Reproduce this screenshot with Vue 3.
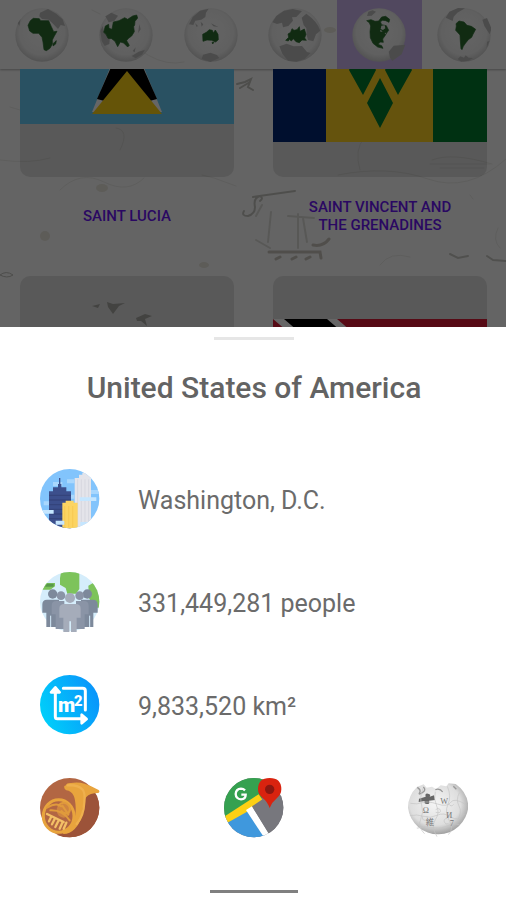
<template>
  <div class="screen">
    <div class="browse">
      <svg class="map-art" viewBox="0 0 506 327" preserveAspectRatio="xMidYMin slice" aria-hidden="true">
        <g fill="none" stroke="#ebebe8" stroke-width="1" stroke-linecap="round">
          <path d="M0 275q6-5 13 0q-6 4-13 0" stroke="#c0c0bb" />
          <path d="M92 10l8 4M202 175l12 3 22 8M10 107l10 3M60 190q20-20 44-8t40-4M120 150q10-20-4-22M110 20q40 50 74 42" />
          <path d="M237 84l8-2 6-3-3 8 5 3M240 88l10-6" stroke="#c0c0bb" stroke-width="2" />
          <path d="M244 211q-3 5 4 5q7-2 7-9q-2-9 5-11q4 2 0 5M253 197l42-6" stroke="#c4c4be" stroke-width="2" />
          <path d="M262 205l-6 11M271 212l-3 30M298 214v34M303 218l4 24M256 240l14 8M288 216l26 2" stroke="#dcdcd8" stroke-width="2" />
          <path d="M269 252h51l1 6M280 257l-4 2M296 257l-4 2M310 257l-4 2M313 245q10 2 16-6" stroke="#c8c4bb" stroke-width="3" />
          <path d="M450 254l8 4 10-2M487 256l6 4 13 1" stroke="#c8c8c3" stroke-width="2" />
          <path d="M470 195l3 4M498 228q-6 12 2 20M380 265q10-14 30-8M0 160q30 4 50-2M338 175q50-10 90 4t78-20" />
          <path d="M360 170q-6-20 4-32M430 164h60M440 168h44M432 160q20-8 60 4" />
        </g>
        <g fill="#bcbcb7">
          <path d="M107 302l6 2 12-1-6 3-6 8-5-7zM136 318l9-4 7 2-7 3 2 7-6-5-4 0zM92 306l8-2-2 4z" />
        </g>
        <g fill="#e8e5dc">
          <ellipse cx="45" cy="236" rx="5" ry="5" />
          <ellipse cx="204" cy="265" rx="5" ry="3" />
          <ellipse cx="102" cy="188" rx="6" ry="4" />
          <ellipse cx="330" cy="30" rx="6" ry="3" />
        </g>
      </svg>

      <nav class="regions">
        <button
          v-for="(region, index) in regions"
          :key="region.name"
          type="button"
          class="region"
          :class="{ active: region.name === activeRegion }"
          :aria-label="region.name"
          @click="activeRegion = region.name"
        >
          <svg class="globe" :viewBox="`${region.x} 24 162 162`" aria-hidden="true">
            <defs>
              <radialGradient :id="'shade-' + index" cx="50%" cy="45%" r="56%">
                <stop offset="0" stop-color="#fafafa" />
                <stop offset="0.75" stop-color="#f0f0f0" />
                <stop offset="1" stop-color="#cccccc" />
              </radialGradient>
            </defs>
            <circle :cx="region.x + 81" cy="105" r="80" :fill="`url(#shade-${index})`" />
            <path :d="region.other" fill="#bcbcbc" />
            <path :d="region.land" fill="#2b6b2f" stroke="#2b6b2f" stroke-width="2" stroke-linejoin="round" />
            <path v-if="region.lakes" :d="region.lakes" fill="#dfe5df" />
          </svg>
        </button>
      </nav>

      <main class="countries">
        <div class="grid">
          <article v-for="country in countries" :key="country.flag" class="country">
            <div class="flag-box">
              <svg v-if="country.flag === 'lc'" class="flag" viewBox="0 0 214 107" aria-hidden="true">
                <path d="M0 0h214v107H0z" fill="#66cbf5" />
                <path d="M107 9l35 86H72z" fill="#fff" />
                <path d="M107 14l30 68-30 8-30-8z" fill="#000" />
                <path d="M107 54l35 43H72z" fill="#fcd116" />
              </svg>
              <svg v-else-if="country.flag === 'vc'" class="flag" viewBox="0 0 214 143" aria-hidden="true">
                <path d="M0 0h54v143H0z" fill="#002674" />
                <path d="M53 0h108v143H53z" fill="#fcd022" />
                <path d="M160 0h54v143h-54z" fill="#007c2e" />
                <path d="M89 46l14 25-13 25-14-25zM125 46l14 25-14 25-13-25zM107 79l13 25-13 25-13-25z" fill="#007c2e" />
              </svg>
              <svg v-else-if="country.flag === 'bs'" class="flag" viewBox="0 0 214 107" aria-hidden="true">
                <path d="M0 0h214v107H0z" fill="#00778b" />
                <path d="M0 36h214v35H0z" fill="#ffc72c" />
                <path d="M0 0l93 53L0 107z" fill="#000" />
              </svg>
              <svg v-else class="flag" viewBox="0 0 214 128" aria-hidden="true">
                <path d="M0 0h214v128H0z" fill="#da1a35" />
                <path d="M0 0h64l150 128h-64z" fill="#fff" />
                <path d="M11 0h43l149 128h-43z" fill="#000" />
              </svg>
            </div>
            <h2 v-if="country.name" class="country-name">{{ country.name }}</h2>
          </article>
        </div>
      </main>
      <div class="scrim"></div>
    </div>

    <section class="sheet" aria-labelledby="sheet-title">
      <div class="handle"></div>
      <h1 id="sheet-title" class="title">United States of America</h1>

      <ul class="facts">
        <li class="fact">
          <svg class="icon" viewBox="29 29 180 180" aria-hidden="true">
            <defs><clipPath id="clip-city"><circle cx="118" cy="118" r="89" /></clipPath></defs>
            <g clip-path="url(#clip-city)">
              <path d="M28 28h182v182H28z" fill="#82c4fc" />
              <path d="M68 68h28v12H68zM40 126h20v12H40zM110 60h22v12h-22zM180 92h30v12h-30zM100 106h32v12h-32z" fill="#a9d7fd" />
              <path d="M133 56h13V46h10v-6h14v-8h6v8h4v16h2v154h-49z" fill="#e4e4ea" />
              <path d="M142 60v150M153 60v150M164 60v150M175 60v150" stroke="#d6d7df" stroke-width="3" />
              <path d="M56 96h12V84h15V74h3V56h4v18h3v10h15v12h14v114H56z" fill="#3c4f8c" />
              <path d="M56 108h66M56 122h66M56 136h66M56 150h66M56 164h66M56 178h66" stroke="#34447c" stroke-width="4" />
              <path d="M96 130h10v-6h24v6h12v80H96z" fill="#fcd462" />
              <path d="M103 140v64M115 140v64M127 140v64" stroke="#f8cb55" stroke-width="4" />
              <path d="M148 114h50v11h-50zM28 152h42v11H28zM76 184h26v12H76zM150 188h36v12h-36z" fill="#c5e6ff" />
            </g>
          </svg>
          <span>Washington, D.C.</span>
        </li>
        <li class="fact">
          <svg class="icon" viewBox="29 29 180 180" aria-hidden="true">
            <defs><clipPath id="clip-people"><circle cx="118" cy="118" r="89" /></clipPath></defs>
            <g clip-path="url(#clip-people)">
              <path d="M28 28h182v182H28z" fill="#d5edfb" />
              <path d="M92 28h55v52l-10 14h-26l-5-17-17-10V48z" fill="#7dc35b" />
              <path d="M46 62h28v10l-14 10H36zM174 70l14-8 24 20v54h-18l-18-28z" fill="#7dc35b" />
              <path d="M50 64h20v9H44z" fill="#58984b" />
            </g>
            <g fill="#7d899b">
              <circle cx="67" cy="95" r="14" />
              <circle cx="171" cy="95" r="14" />
              <path d="M36 151v-25q0-14 14-14h36v82H48v-43z" />
              <path d="M202 151v-25q0-14-14-14h-36v82h37v-43z" />
            </g>
            <g fill="#8a94a6">
              <circle cx="92" cy="100" r="13" />
              <circle cx="148" cy="100" r="13" />
              <path d="M64 156v-26q0-14 14-14h24v84H76v-44zM175 156v-26q0-14-14-14h-24v84h26v-44z" />
            </g>
            <path d="M61 160v34M178 160v34" stroke="#d5edfb" stroke-width="3" />
            <g fill="#a5acba">
              <circle cx="119" cy="107" r="15" />
              <path d="M87 166v-27q0-14 15-14h34q15 0 15 14v27h-12v43h-17v-32h-5v32H99v-43z" />
            </g>
          </svg>
          <span>331,449,281 people</span>
        </li>
        <li class="fact">
          <svg class="icon" viewBox="29 29 180 180" aria-hidden="true">
            <defs>
              <linearGradient id="area-fill" x1="0" y1="0.7" x2="1" y2="0.3">
                <stop offset="0" stop-color="#00d0fa" />
                <stop offset="1" stop-color="#0a93fb" />
              </linearGradient>
            </defs>
            <circle cx="118" cy="118" r="89" fill="url(#area-fill)" />
            <path d="M75 80v74q0 6 6 6h76M99 69h58q8 0 8 8v57" fill="none" stroke="#fff" stroke-width="9" stroke-linecap="round" />
            <path d="M75 66l13 15H62zM169 161l-15-13v26z" fill="#fff" stroke="#fff" stroke-width="8" stroke-linejoin="round" />
            <text x="83" y="139" class="area-m">m</text>
            <text x="131" y="121" class="area-two">2</text>
          </svg>
          <span>9,833,520 km²</span>
        </li>
      </ul>

      <div class="links">
        <a href="#anthem" aria-label="Anthem">
          <svg class="icon" viewBox="29 29 180 180" aria-hidden="true">
            <circle cx="118" cy="118" r="89" fill="#b26643" />
            <path d="M171 49q36 28 36 69a89 89 0 0 1-89 89q-22 0-40-8 65-5 78-62z" fill="#9c5339" />
            <path d="M107 51q2-8 15-7 20-4 41 2 20 6 42 19 5 5-1 9-26 0-36 12-8 10-10 30-2 43-25 66-14 15-34 15l-4-12q16-4 27-15 16-19 14-53-1-25-6-35-7-14-22-16-8-4-6-13z" fill="#e8a43d" />
            <path d="M112 51q32-2 45 13 8 11 5 37-2 43-23 66" fill="none" stroke="#efb04e" stroke-width="7" stroke-linecap="round" />
            <ellipse cx="85" cy="143" rx="46" ry="49" fill="none" stroke="#e8a43d" stroke-width="9" />
            <ellipse cx="100" cy="126" rx="21" ry="22" fill="#cf8440" />
            <path d="M50 118q28-16 42-4M84 112q12-13 25-6 15 11 7 25-13 9-23-3M96 112l18 26M60 126q36-2 58 30" fill="none" stroke="#e09a3c" stroke-width="6" stroke-linecap="round" />
            <path d="M50 137l50 24M62 147l-6 12M73 152l-8 16M84 158l-9 18M96 163l-8 18M108 163l-8 18" stroke="#f3c066" stroke-width="7" stroke-linecap="round" />
          </svg>
        </a>
        <a href="#map" aria-label="Map">
          <svg class="icon" viewBox="29 29 180 180" aria-hidden="true">
            <defs><clipPath id="clip-map"><circle cx="118" cy="118" r="89" /></clipPath></defs>
            <g clip-path="url(#clip-map)">
              <path d="M28 28h182v182H28z" fill="#77777d" />
              <path d="M28 28h140v46L28 152z" fill="#35a150" />
              <path d="M34 162l69-38 56 86H28z" fill="#3f98dd" />
              <path d="M28 146l105-68 16 24L34 166z" fill="#fdd014" />
              <path d="M95 125l18-11 55 88-17 8z" fill="#fff" />
              <path d="M113 114l36-24 62-10v94l-43 30z" fill="#77777d" />
            </g>
            <path d="M166 119q-7-20-22-31-13-10-13-25 0-34 35-34t35 34q0 15-13 26-15 12-22 30z" fill="#d9230f" />
            <circle cx="166" cy="63" r="14" fill="#8c1710" />
            <path d="M92 66q-5-5-12-5-15 1-16 16 1 15 16 16 14-1 14-14H81" fill="none" stroke="#fff" stroke-width="7" />
          </svg>
        </a>
        <a href="#wiki" aria-label="Wikipedia">
          <svg class="icon" viewBox="29 29 180 180" aria-hidden="true">
            <defs>
              <radialGradient id="wiki-fill" cx="45%" cy="40%" r="60%">
                <stop offset="0" stop-color="#f5f5f5" />
                <stop offset="0.7" stop-color="#dedede" />
                <stop offset="1" stop-color="#a2a2a2" />
              </radialGradient>
              <clipPath id="clip-wiki"><circle cx="119" cy="118" r="89" /></clipPath>
            </defs>
            <path d="M56 56l20-8 9 10 16-3 12 7 14-11 17 3 7-9 21 2q36 25 38 68a91 91 0 0 1-181 3q0-36 27-62z" fill="url(#wiki-fill)" />
            <path d="M62 91l20-6q-3-11 7-9t5 9l13-4 3 14-18 2q4 10-6 10t-7-9l-18 3z" fill="#666" />
            <path d="M57 57q12 8 7 16t8 0 3-17M111 64q14-5 22 7M165 54l9 9" fill="none" stroke="#999" stroke-width="4" />
            <g fill="none" stroke="#c4c4c4" stroke-width="2" clip-path="url(#clip-wiki)">
              <path d="M36 105q21 4 36-2t45 4 40-5 45 6M34 142q22-5 42 2t40-3 42 5 40-9M54 180q24-8 48-2t45-5 37-3" />
              <path d="M74 60q-11 28-4 50t-3 43 12 44M111 70q-6 22 4 43t-4 41 5 51M147 54q13 30 2 54t4 49-3 42M183 73q-11 22-1 40t-4 42" />
              <path d="M112 124q11-8 14 2t-14 6M74 143q-5 12 6 13t6-12M150 106q9 12 16 2M146 150q-11 2-8 11t12 5" />
            </g>
            <g class="wiki-glyphs">
              <text x="73" y="134">Ω</text>
              <text x="126" y="108">W</text>
              <text x="144" y="148">И</text>
              <text x="82" y="171">維</text>
              <text x="154" y="174">7</text>
            </g>
          </svg>
        </a>
      </div>
      <div class="home-bar"></div>
    </section>
  </div>
</template>

<script setup>
import { ref } from 'vue'

const activeRegion = ref('North America')

const regions = [
  {
    name: 'Africa',
    x: 46,
    land: 'M85 76l7-14 9-7 18 1 4 6 24 0 8 18 7 15 10-1-9 16-5 10 0 12-7 13-11 7-7-3-3-23-3-14-10-12-17 0-10-7zM166 125l4-3-2 10-8 6 0-7z',
    other: 'M121 38l24-11 25 14 19 17 7 20-13-3-8 12-15-16-13-12-20-2-8-8zM54 70l9-13-4 21z'
  },
  {
    name: 'Asia',
    x: 300,
    land: 'M319 78l10-5 1 12 9 3 4-22 17-4 17-9 9 5 15-10 12-3 3 9-8 10-1 11-3 5 2 15-8 13-11 8-4 6 8 14-5 5-12-12-10-3-8 14-8-16-10-8-11-1-6-12-7-6z',
    other: 'M319 49l18-11 20 9-11 16-17 4zM304 93l7-15 5 20 17 12-2 22-14 6-9-15zM398 168l21-13 19-6-9 15-19 11zM380 144l10 11M410 142l-9 11 6 4zM421 72l4 16-8 12z'
  },
  {
    name: 'Oceania',
    x: 553,
    land: 'M609 103l11-6 9-8 9 2 3 8 6-9 8 13 1 16-8 7-12-5-14-1-12 4zM637 127l6 0-4 5z',
    other: 'M568 73l11-22 22-19 26-6-8 12-2 13-12 8-18 3-6 13zM586 69l9 9-4 3zM603 65l8 8-5 7zM634 70l22 11-15-2zM606 177l4-13 22-6 20 7 7 9-27 12z'
  },
  {
    name: 'Europe',
    x: 46,
    land: 'M99 121l9-9-2-10 8-5 4-11 6 5 9-2 7-9 2 14 13-7 5 16-4 11 5 7-13-1-8 8-10-3-8-9-6 7-6-5-3 5z',
    other: 'M59 67l12-19 23-16 26-5 28 6-17 18-13 1 3 10-14 16-16 4-3-14-15 4zM147 53l14-12q33 23 42 51l-13 11-8 21-16-4-4-14-1-21-8-10zM80 139l22-8 21 8 25-1 15 18 11 3-18 18-24 8-26-3-17-21z'
  },
  {
    name: 'North America',
    x: 300,
    land: 'M344 62l13-3 12 5 11-1 9-12 12-2 12 9-2 9-10-5-9-1-7 4 4 9 14 3 7 14-6 8-6 10-6 8 2 10-9-1-7 7 11 4 4 8-16-4-14-11-8-17-1-18 2-17-4-10z',
    other: 'M345 48l4-13 13-4 10 4-13 12zM410 155l15-18 35-3-11 29-28 20-7-10z',
    lakes: 'M388 77l10-1 2 9-7 5-7-3zM384 89l8 5-6 2zM398 99l5-1-3 5z'
  },
  {
    name: 'South America',
    x: 554,
    land: 'M611 71l9-8 15 3 9 10 13 3 13 9-8 15-4 9-10 7-8 10-7 10-4 10-3-3-2-23-1-18-13-14 2-13z',
    other: 'M580 53l11-18 26-11 21 1-23 13-11 12-3 13zM690 59l14-5 14 32-6 17-16-25zM704 125l8-3-9 22zM616 177l8-8 11 4 5-7 9 7 13 1-13 8-23 3z'
  }
]

const countries = [
  { name: 'Saint Lucia', flag: 'lc' },
  { name: 'Saint Vincent and the Grenadines', flag: 'vc' },
  { flag: 'bs' },
  { flag: 'tt' }
]
</script>

<style>
body {
  margin: 0;
  background: #fff;
}
</style>

<style scoped>
.screen {
  height: 100vh;
  display: flex;
  flex-direction: column;
  overflow: hidden;
  font-family: Roboto, sans-serif;
}

.browse {
  position: relative;
  flex: 1;
  min-height: 0;
  display: flex;
  flex-direction: column;
  overflow: hidden;
  background: #fafafa;
}

.map-art {
  position: absolute;
  inset: 0;
  width: 100%;
  height: 100%;
}

.scrim {
  position: absolute;
  inset: 0;
  background: rgba(0, 0, 0, 0.6);
}

.regions {
  position: relative;
  display: flex;
  flex: none;
  height: 69px;
  box-shadow: 0 1px 2px rgba(0, 0, 0, 0.3);
}

.region {
  flex: 1;
  display: flex;
  align-items: center;
  justify-content: center;
  padding: 0;
  border: none;
  background: transparent;
}

.region.active {
  background: #cbb4ee;
}

.globe {
  width: 54px;
  height: 54px;
}

.countries {
  position: relative;
  flex: 1;
  min-height: 0;
  overflow: hidden;
}

/* list is scrolled part of the way down */
.grid {
  display: grid;
  grid-template-columns: 1fr 1fr;
  gap: 21px 39px;
  padding: 0 19px 0 20px;
  margin-top: -106px;
}

.flag-box {
  display: flex;
  align-items: center;
  aspect-ratio: 1;
  border-radius: 10px;
  background: rgba(0, 0, 0, 0.11);
}

.flag {
  display: block;
  width: 100%;
}

.country-name {
  display: flex;
  align-items: center;
  justify-content: center;
  height: 78px;
  margin: 0;
  padding: 0 28px;
  font-size: 15px;
  font-weight: 500;
  line-height: 18px;
  text-align: center;
  text-transform: uppercase;
  color: #6a14f5;
}

.sheet {
  flex: none;
  padding: 10px 38px 7px 40px;
  background: #fff;
  color: #6b6b6b;
}

.handle {
  width: 80px;
  height: 3px;
  margin: 0 auto;
  background: #e6e6e6;
}

.title {
  margin: 30px 0 63px;
  font-size: 30px;
  font-weight: 500;
  line-height: 36px;
  text-align: center;
  color: #636363;
}

.facts {
  display: flex;
  flex-direction: column;
  gap: 43px;
  margin: 0;
  padding: 0;
  list-style: none;
}

.fact {
  display: flex;
  align-items: center;
  gap: 38px;
  font-size: 25px;
  line-height: 32px;
}

.fact span {
  padding-top: 3px;
}

.icon {
  display: block;
  flex: none;
  width: 60px;
  height: 60px;
}

.links {
  display: flex;
  justify-content: space-between;
  margin-top: 43px;
}

.home-bar {
  width: 88px;
  height: 3px;
  margin: 52px auto 0;
  background: #808080;
}

.area-m {
  font: 900 60px Roboto, sans-serif;
  fill: #fff;
}

.area-two {
  font: 900 44px Roboto, sans-serif;
  fill: #fff;
}

.wiki-glyphs {
  font: 25px "Liberation Serif", "Noto Sans CJK JP", serif;
  fill: #777;
}
</style>
